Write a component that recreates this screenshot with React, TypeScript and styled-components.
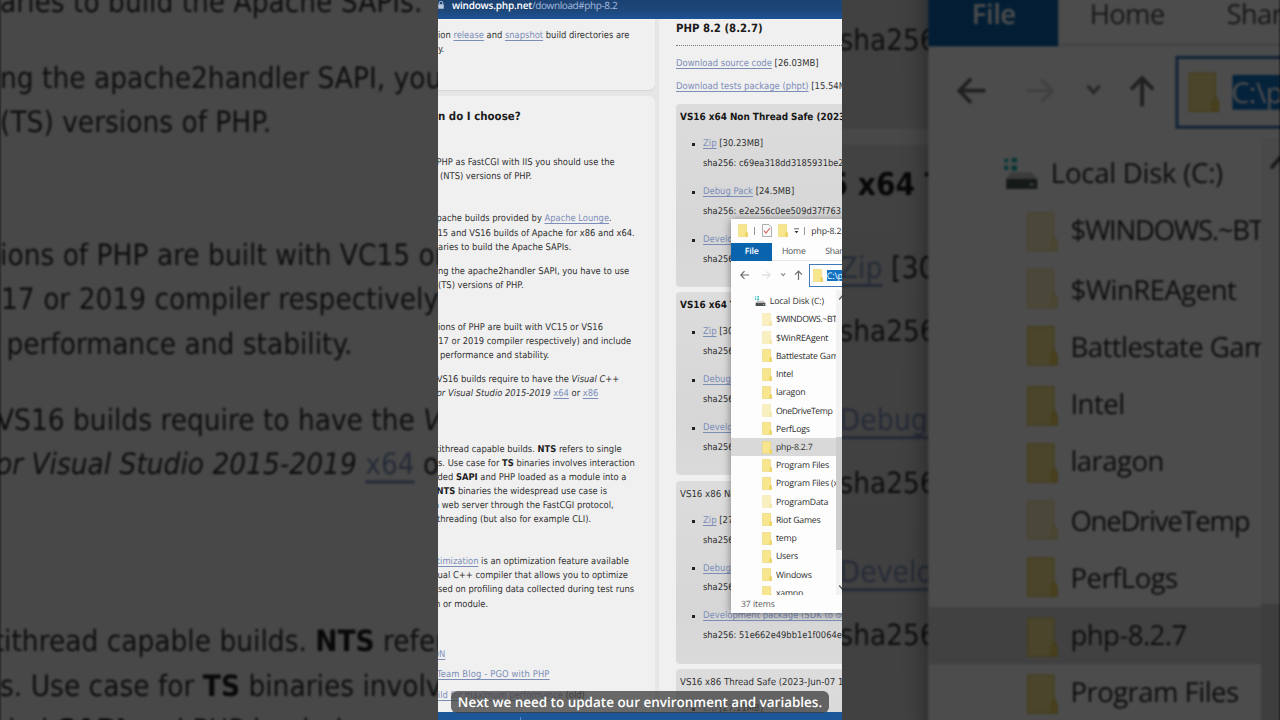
import React, { ReactElement, ReactNode } from 'react'
import styled, { createGlobalStyle } from 'styled-components'

const treeItems = [
  { name: '$WINDOWS.~BT', faded: true, tight: true },
  { name: '$WinREAgent', faded: true },
  { name: 'Battlestate Games' },
  { name: 'Intel' },
  { name: 'laragon' },
  { name: 'OneDriveTemp', faded: true, tight: true },
  { name: 'PerfLogs' },
  { name: 'php-8.2.7', selected: true },
  { name: 'Program Files' },
  { name: 'Program Files (x86)' },
  { name: 'ProgramData', faded: true },
  { name: 'Riot Games' },
  { name: 'temp' },
  { name: 'Users' },
  { name: 'Windows' },
  { name: 'xampp' },
]

const builds = [
  {
    title: 'VS16 x64 Non Thread Safe (2023-Jun-07)',
    bold: true,
    files: [
      ['Zip', ' [30.23MB]', 'c69ea318dd3185931be2'],
      ['Debug Pack', ' [24.5MB]', 'e2e256c0ee509d37f763'],
      ['Development package (SDK to develop)', '', '7a2c'],
    ],
  },
  {
    title: 'VS16 x64 Thread Safe (2023-Jun-07)',
    bold: true,
    files: [
      ['Zip', ' [30.34MB]', '4c3d'],
      ['Debug Pack', ' [24.5MB]', 'a91b'],
      ['Development package (SDK to develop)', '', '6e02'],
    ],
  },
  {
    title: 'VS16 x86 Non Thread Safe (2023-Jun-07)',
    files: [
      ['Zip', ' [27.04MB]', 'd81f'],
      ['Debug Pack', ' [24.5MB]', '09be'],
      ['Development package (SDK to develop)', '', '51e662e49bb1e1f0064e'],
    ],
  },
  {
    title: 'VS16 x86 Thread Safe (2023-Jun-07 1',
    files: [['Zip', ' [27.11MB]', 'b5aa']],
  },
]

const Folder = ({ faded }: { faded?: boolean }): ReactElement => (
  <FolderSvg viewBox="0 0 10 13" $faded={faded}>
    <path d="M0.4 0.5H8.6V7.8L9.6 9.6V12.5H0.4Z" fill="#f8e68e" stroke="#e6cf66" strokeWidth="0.5" />
    <path d="M7.8 12.5V9.6L8.7 8L9.6 9.6V12.5Z" fill="#f2d964" stroke="#dfc24c" strokeWidth="0.35" />
  </FolderSvg>
)

const Explorer = (): ReactElement => (
  <Window>
    <TitleBar>
      <Folder />
      <Separator />
      <svg width="10" height="13" viewBox="0 0 10 13">
        <path d="M0.5 0.5H7L9.5 3V12.5H0.5Z" fill="#fafafa" stroke="#9a9a9a" strokeWidth="0.8" />
        <path d="M2 6.5L4 9L8 4" fill="none" stroke="#d0605a" strokeWidth="1.1" />
      </svg>
      <Folder />
      <svg width="5" height="7" viewBox="0 0 5 7">
        <path d="M0 1.8H5" stroke="#444" strokeWidth="0.8" />
        <path d="M0.5 4H4.5L2.5 6.2Z" fill="#333" />
      </svg>
      <Separator />
      <span>php-8.2.7</span>
    </TitleBar>
    <Ribbon>
      <FileTab>File</FileTab>
      <RibbonTab>Home</RibbonTab>
      <RibbonTab>Share</RibbonTab>
    </Ribbon>
    <NavBar>
      <svg width="56" height="12" viewBox="0 0 56 12" fill="none">
        <path d="M9 6H1M4.5 2.2L0.8 6L4.5 9.8" stroke="#6c6c6c" strokeWidth="1.2" />
        <path d="M22 6H30M26.7 2.5L30.2 6L26.7 9.5" stroke="#d4d4d4" strokeWidth="1" />
        <path d="M41.3 4.4L43.2 6.6L45.1 4.4" stroke="#888" strokeWidth="1.1" />
      </svg>
      <svg width="9" height="12" viewBox="0 0 9 12" fill="none">
        <path d="M4.5 11V2M1 5.6L4.5 2L8 5.6" stroke="#6c6c6c" strokeWidth="1.2" />
      </svg>
      <AddressBox>
        <Folder />
        <Selection>C:\php-8.2.7</Selection>
      </AddressBox>
    </NavBar>
    <TreeArea>
      <Tree>
        <DriveRow>
          <svg width="12" height="11" viewBox="0 0 12 11">
            <path d="M1 0.5H2.2V1.6H1ZM3.3 0.2H5V1.6H3.3ZM1 2.6H2.2V4H1ZM3.3 2.6H5V4.2H3.3Z" fill="#18b0b4" />
            <path d="M3 4.8H9.5L11.3 6.8H1.8Z" fill="#c4c4c4" />
            <path d="M1.6 6.8H11.4V10H1.6Z" fill="#4a5252" />
            <path d="M9 8.2H10.2V9H9Z" fill="#bfe6c4" />
          </svg>
          Local Disk (C:)
        </DriveRow>
        {treeItems.map((item) => (
          <TreeRow key={item.name} $selected={item.selected} $tight={item.tight}>
            <Folder faded={item.faded} />
            {item.name}
          </TreeRow>
        ))}
      </Tree>
      <ScrollBar>
        <svg width="8" height="6" viewBox="0 0 8 6" fill="none">
          <path d="M1.2 4.5L4 1.2L6.8 4.5" stroke="#555" strokeWidth="1.2" />
        </svg>
        <Thumb />
        <svg width="8" height="6" viewBox="0 0 8 6" fill="none">
          <path d="M1.2 1.5L4 4.8L6.8 1.5" stroke="#555" strokeWidth="1.2" />
        </svg>
      </ScrollBar>
    </TreeArea>
    <StatusBar>37 items</StatusBar>
  </Window>
)

const Paragraph = ({ top, lines }: { top: number; lines: ReactNode[] }): ReactElement => (
  <Para $top={top}>
    {lines.map((line, i) => (
      <Line key={i}>{line}</Line>
    ))}
  </Para>
)

const Screen = (): ReactElement => (
  <ScreenContainer>
    <UrlBar>
      <svg width="6" height="8" viewBox="0 0 6 8">
        <path d="M1.2 3.5V2a1.8 1.8 0 0 1 3.6 0V3.5" fill="none" stroke="#b9c9e2" strokeWidth="0.9" />
        <rect x="0.2" y="3.2" width="5.6" height="4.6" rx="0.6" fill="#b9c9e2" />
      </svg>
      <Url>
        <b>windows.php.net</b>/download#php-8.2
      </Url>
    </UrlBar>
    <Page>
      <Sidebar>
        <TopCard>
          <Paragraph
            top={10.8}
            lines={[
              <>
                ion <Link>release</Link> and <Link>snapshot</Link> build directories are
              </>,
              'y.',
            ]}
          />
        </TopCard>
        <MainCard>
          <CardHeading>n do I choose?</CardHeading>
          <Paragraph
            top={32.8}
            lines={[
              <Shift $x={-1.5}>PHP as FastCGI with IIS you should use the</Shift>,
              <Shift $x={2}>(NTS) versions of PHP.</Shift>,
            ]}
          />
          <Paragraph
            top={28}
            lines={[
              <Shift $x={-1.5}>
                pache builds provided by <Link>Apache Lounge</Link>.
              </Shift>,
              <Shift $x={-0.5}>15 and VS16 builds of Apache for x86 and x64.</Shift>,
              'aries to build the Apache SAPIs.',
            ]}
          />
          <Paragraph
            top={10.2}
            lines={['ng the apache2handler SAPI, you have to use', '(TS) versions of PHP.']}
          />
          <Paragraph
            top={28}
            lines={[
              'ions of PHP are built with VC15 or VS16',
              <Shift $x={0.3}>17 or 2019 compiler respectively) and include</Shift>,
              <Shift $x={2}>performance and stability.</Shift>,
            ]}
          />
          <Paragraph
            top={9.8}
            lines={[
              <Shift $x={-1.3}>
                VS16 builds require to have the <i>Visual C++</i>
              </Shift>,
              <Shift $x={-1.3}>
                <i>or Visual Studio 2015-2019</i> <Link>x64</Link> or <Link>x86</Link>
              </Shift>,
            ]}
          />
          <Paragraph
            top={41.6}
            lines={[
              <Shift $x={-2}>
                tithread capable builds. <b>NTS</b> refers to single
              </Shift>,
              <>
                s. Use case for <b>TS</b> binaries involves interaction
              </>,
              <Shift $x={-0.5}>
                ded <b>SAPI</b> and PHP loaded as a module into a
              </Shift>,
              <Shift $x={-1.5}>
                <b>NTS</b> binaries the widespread use case is
              </Shift>,
              <Shift $x={-4}>a web server through the FastCGI protocol,</Shift>,
              <Shift $x={-1}>threading (but also for example CLI).</Shift>,
            ]}
          />
          <Paragraph
            top={28}
            lines={[
              <Shift $x={-6.3}>
                <Link>otimization</Link> is an optimization feature available
              </Shift>,
              <Shift $x={-0.5}>ual C++ compiler that allows you to optimize</Shift>,
              'sed on profiling data collected during test runs',
              <Shift $x={-3}>n or module.</Shift>,
            ]}
          />
          <Paragraph
            top={36.4}
            lines={[
              <Shift $x={-5.5}>
                <Link>ON</Link>
              </Shift>,
            ]}
          />
          <Paragraph
            top={6.2}
            lines={[
              <Wide>
                <Link>Team Blog - PGO with PHP</Link>
              </Wide>,
            ]}
          />
          <Paragraph
            top={6.2}
            lines={[
              <Shift $x={-5.5}>
                <Link>uild for maximum performance</Link> (old)
              </Shift>,
            ]}
          />
        </MainCard>
      </Sidebar>
      <Downloads>
        <VersionHeading>PHP 8.2 (8.2.7)</VersionHeading>
        <DownloadLine>
          <Link>Download source code</Link> [26.03MB]
        </DownloadLine>
        <DownloadLine>
          <Link>Download tests package (phpt)</Link> [15.54MB]
        </DownloadLine>
        {builds.map((build) => (
          <Build key={build.title}>
            <BuildTitle $bold={build.bold}>{build.title}</BuildTitle>
            {build.files.map(([label, size, sha]) => (
              <FileEntry key={label}>
                <div>
                  <Link>{label}</Link>
                  {size}
                </div>
                <Checksum>sha256: {sha}</Checksum>
              </FileEntry>
            ))}
          </Build>
        ))}
      </Downloads>
    </Page>
    <TaskBar>
      <TaskMark />
    </TaskBar>
    <Explorer />
  </ScreenContainer>
)

const App = (): ReactElement => (
  <Stage>
    <GlobalStyle />
    <Backdrop>
      <Screen />
    </Backdrop>
    <Screen />
    <Caption>Next we need to update our environment and variables.</Caption>
  </Stage>
)

const GlobalStyle = createGlobalStyle`
  body {
    margin: 0;
    overflow: hidden;
    background: #000;
  }
  * {
    box-sizing: border-box;
  }
`

const Stage = styled.div`
  position: relative;
  width: 1280px;
  height: 720px;
  overflow: hidden;
  display: flex;
  justify-content: center;
  text-rendering: geometricPrecision;
`

// Enlarged, dimmed copy of the screen filling the sides
const Backdrop = styled.div`
  position: absolute;
  top: 0;
  left: 438px;
  transform: scale(3.168);
  filter: brightness(0.3) blur(0.27px);
`

const ScreenContainer = styled.div`
  position: relative;
  flex: none;
  width: 404px;
  height: 720px;
  overflow: hidden;
  display: flex;
  flex-direction: column;
  background: #f0f0f0;
  font: 9.3px/14.08px 'DejaVu Sans Condensed', 'DejaVu Sans', sans-serif;
  font-stretch: condensed;
  color: #303030;
  white-space: nowrap;
`

const UrlBar = styled.div`
  flex: none;
  height: 18.5px;
  padding: 0 0 8px 0;
  display: flex;
  align-items: center;
  gap: 8px;
  background: linear-gradient(#1c4273, #1e4678 50%, #1c5296);
`

const Url = styled.span`
  font: 10px/13px 'Open Sans', sans-serif;
  letter-spacing: -0.4px;
  color: #a5bcdf;
  b {
    font-weight: 600;
    letter-spacing: -0.2px;
    color: #fff;
  }
`

const Page = styled.div`
  height: 693.5px;
  flex: none;
  overflow: hidden;
  display: flex;
`

const Sidebar = styled.div`
  width: 221px;
  flex: none;
  padding-right: 4px;
  background: #e6e6e6;
  display: flex;
  flex-direction: column;
  gap: 6px;
`

const TopCard = styled.div`
  height: 71px;
  background: #f0f0f0;
  border-radius: 0 0 6px 0;
  box-shadow: 0 1px 1px #d4d4d4;
  display: flow-root;
`

const MainCard = styled.div`
  flex: 1;
  background: #f0f0f0;
  border-radius: 0 6px 0 0;
  display: flow-root;
`

const CardHeading = styled.div`
  margin-top: 13px;
  height: 15px;
  font-size: 11.4px;
  line-height: 15px;
  font-weight: bold;
  color: #1c1c1c;
`

const Para = styled.div<{ $top: number }>`
  margin-top: ${({ $top }) => $top}px;
  b {
    color: #1c1c1c;
  }
`

const Line = styled.div`
  height: 14.08px;
`

const Shift = styled.span<{ $x: number }>`
  margin-left: ${({ $x }) => $x}px;
`

const Wide = styled.span`
  margin-left: -1px;
  letter-spacing: 0.15px;
`

const Link = styled.span`
  color: #7c8eb8;
  text-decoration: underline;
  text-decoration-thickness: 0.8px;
  text-underline-offset: 1.5px;
`

const Downloads = styled.div`
  flex: 1;
  min-width: 0;
  padding-left: 17px;
  overflow: hidden;
  font-size: 9.42px;
`

const VersionHeading = styled.div`
  height: 27px;
  padding-top: 2px;
  margin-bottom: 11px;
  border-bottom: 1px dotted #777;
  font-size: 11.3px;
  line-height: 15px;
  font-weight: bold;
  color: #1c1c1c;
`

const DownloadLine = styled.div`
  height: 14px;
  margin-bottom: 9.8px;
`

const Build = styled.div`
  height: 183px;
  margin-bottom: 5.3px;
  padding: 6.9px 0 0 4px;
  border-radius: 4px 0 0 4px;
  background: linear-gradient(#dcdcdc, #d6d6d6 70%, #dadada);
`

const BuildTitle = styled.div<{ $bold?: boolean }>`
  height: 14px;
  margin-bottom: 12.2px;
  font-size: ${({ $bold }) => ($bold ? '9.9px' : '9.6px')};
  font-weight: ${({ $bold }) => ($bold ? 'bold' : 'normal')};
  color: ${({ $bold }) => ($bold ? '#161616' : '#303030')};
`

const FileEntry = styled.div`
  position: relative;
  height: 47.8px;
  padding-left: 23px;
  > div {
    height: 19.8px;
  }
  &::before {
    content: '';
    position: absolute;
    left: 12px;
    top: 5.8px;
    width: 3px;
    height: 3px;
    background: #222;
  }
`

const Checksum = styled.div`
  font-size: 9.25px;
`

const TaskBar = styled.div`
  flex: none;
  height: 8px;
  padding: 5px 0 0 82px;
  background: #1b5799;
`

const TaskMark = styled.div`
  width: 1px;
  height: 3px;
  background: #5f8cc0;
`

const Window = styled.div`
  position: absolute;
  left: 292.7px;
  top: 219px;
  width: 230px;
  height: 394px;
  display: flex;
  flex-direction: column;
  background: #fdfdfd;
  box-shadow: 0 1px 8px rgba(0, 0, 0, 0.45);
  font-family: 'Open Sans', sans-serif;
  font-stretch: normal;
  font-size: 8.7px;
  letter-spacing: -0.15px;
  color: #2c2c2c;
`

const FolderSvg = styled.svg<{ $faded?: boolean }>`
  flex: none;
  width: 10px;
  height: 13px;
  opacity: ${({ $faded }) => ($faded ? 0.55 : 1)};
`

const TitleBar = styled.div`
  height: 23.5px;
  display: flex;
  align-items: center;
  padding-left: 7.8px;
  gap: 5.9px;
  > svg:nth-child(3) {
    margin-left: 1px;
  }
  > svg:nth-child(5) {
    margin-left: -0.5px;
  }
`

const Separator = styled.div`
  width: 1px;
  height: 8px;
  background: #999;
`

const Ribbon = styled.div`
  height: 18px;
  display: flex;
  padding-left: 0.7px;
  border-bottom: 1px solid #e6e6e6;
  line-height: 17.5px;
`

const FileTab = styled.div`
  width: 40.6px;
  height: 18px;
  text-align: center;
  font-weight: 600;
  color: #fff;
  background: #0a64ad;
`

const RibbonTab = styled.div`
  width: 43.2px;
  padding-left: 10px;
  letter-spacing: -0.25px;
  color: #505050;
`

const NavBar = styled.div`
  height: 29.5px;
  display: flex;
  align-items: center;
  padding-left: 9.7px;
  > svg {
    flex: none;
  }
  > svg:nth-child(2) {
    margin-left: -1.9px;
    margin-right: 5.6px;
  }
`

const AddressBox = styled.div`
  flex: none;
  height: 22.5px;
  width: 160px;
  display: flex;
  align-items: center;
  padding-left: 2.6px;
  gap: 4px;
  border: 1px solid #4179b8;
`

const Selection = styled.span`
  line-height: 11.5px;
  font-size: 9px;
  color: #fff;
  background: #1272c4;
`

const TreeArea = styled.div`
  height: 304.5px;
  display: flex;
`

const Tree = styled.div`
  width: 105.3px;
  overflow: hidden;
  padding-top: 2.2px;
`

const TreeRow = styled.div<{ $selected?: boolean; $tight?: boolean }>`
  height: 18.22px;
  display: flex;
  align-items: center;
  padding-left: 31.2px;
  gap: 4px;
  letter-spacing: ${({ $tight }) => ($tight ? '-0.4px' : '-0.17px')};
  background: ${({ $selected }) => ($selected ? '#d9d9d9' : 'transparent')};
`

const DriveRow = styled(TreeRow)`
  padding-left: 23px;
  letter-spacing: -0.08px;
`

const ScrollBar = styled.div`
  width: 17px;
  display: flex;
  flex-direction: column;
  padding: 5px 0 1px 2.5px;
  background: #f2f2f2;
  > svg:first-child {
    margin-bottom: 136px;
  }
`

const Thumb = styled.div`
  height: 113px;
  margin-left: -2.5px;
  margin-bottom: 34px;
  background: #cdcdcd;
`

const StatusBar = styled.div`
  height: 18px;
  padding-left: 10.3px;
  line-height: 18px;
  letter-spacing: -0.1px;
  color: #5a5a5a;
`

const Caption = styled.div`
  position: absolute;
  left: 451px;
  top: 691px;
  width: 378px;
  height: 22px;
  border-radius: 6px;
  background: rgba(60, 60, 60, 0.76);
  color: #fff;
  font: 600 13.47px/23px 'Open Sans', sans-serif;
  text-align: center;
  white-space: nowrap;
`

export default App
